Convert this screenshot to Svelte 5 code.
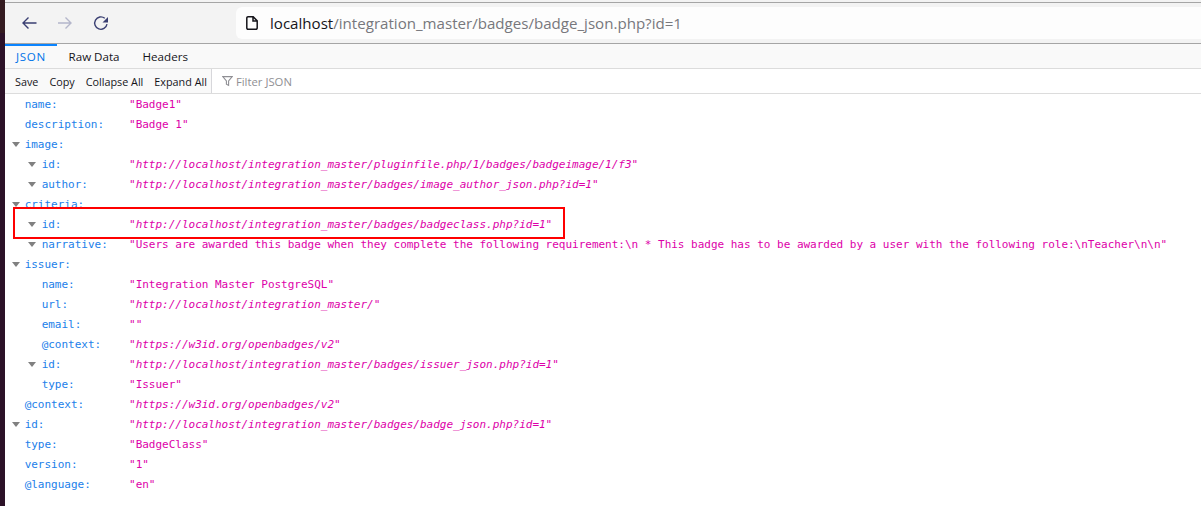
<script lang="ts">
  type Row = { key: string; value?: string; depth: number; twisty?: boolean; link?: boolean };

  const base = 'http://localhost/integration_master';

  const rows: Row[] = [
    { key: 'name', value: 'Badge1', depth: 0 },
    { key: 'description', value: 'Badge 1', depth: 0 },
    { key: 'image', depth: 0, twisty: true },
    { key: 'id', value: `${base}/pluginfile.php/1/badges/badgeimage/1/f3`, depth: 1, twisty: true, link: true },
    { key: 'author', value: `${base}/badges/image_author_json.php?id=1`, depth: 1, twisty: true, link: true },
    { key: 'criteria', depth: 0, twisty: true },
    { key: 'id', value: `${base}/badges/badgeclass.php?id=1`, depth: 1, twisty: true, link: true },
    {
      key: 'narrative',
      value:
        'Users are awarded this badge when they complete the following requirement:\\n * This badge has to be awarded by a user with the following role:\\nTeacher\\n\\n',
      depth: 1,
      twisty: true
    },
    { key: 'issuer', depth: 0, twisty: true },
    { key: 'name', value: 'Integration Master PostgreSQL', depth: 1 },
    { key: 'url', value: `${base}/`, depth: 1, link: true },
    { key: 'email', value: '', depth: 1 },
    { key: '@context', value: 'https://w3id.org/openbadges/v2', depth: 1, link: true },
    { key: 'id', value: `${base}/badges/issuer_json.php?id=1`, depth: 1, twisty: true, link: true },
    { key: 'type', value: 'Issuer', depth: 1 },
    { key: '@context', value: 'https://w3id.org/openbadges/v2', depth: 0, link: true },
    { key: 'id', value: `${base}/badges/badge_json.php?id=1`, depth: 0, twisty: true, link: true },
    { key: 'type', value: 'BadgeClass', depth: 0 },
    { key: 'version', value: '1', depth: 0 },
    { key: '@language', value: 'en', depth: 0 }
  ];

  const tabs = ['JSON', 'Raw Data', 'Headers'];
  const actions = ['Save', 'Copy', 'Collapse All', 'Expand All'];
</script>

<div class="shot">
  <div class="edge"></div>
  <div class="browser">
    <header class="navbar">
      <button class="nav" aria-label="Back">
        <svg viewBox="0 0 16 16" width="16" height="16"><path d="M15.500 8H2M7.500 2.500 2 8l5.500 5.500" /></svg>
      </button>
      <button class="nav off" aria-label="Forward">
        <svg viewBox="0 0 16 16" width="16" height="16"><path d="M1 8h13M8.500 2.500 14 8l-5.500 5.500" /></svg>
      </button>
      <button class="nav" aria-label="Reload">
        <svg viewBox="0 0 16 16" width="16" height="16">
          <path d="M14 9.200A6.200 6.200 0 1 1 11.800 3.300" />
          <path class="solid" d="M15 2v5.500H9.500z" />
        </svg>
      </button>
      <div class="urlbar">
        <svg class="page" viewBox="0 0 12 14" width="12" height="14">
          <path d="M2 .8h5.200L11.200 4.800V12a1.200 1.200 0 0 1-1.200 1.200H2A1.200 1.200 0 0 1 .8 12V2A1.200 1.200 0 0 1 2 .8zM7 .8v4.200h4.200" />
        </svg>
        <span class="host">localhost</span><span class="path">/integration_master/badges/badge_json.php?id=1</span>
      </div>
    </header>

    <nav class="tabs">
      {#each tabs as tab, i}
        <span class="tab" class:active={i === 0}>{tab}</span>
      {/each}
    </nav>

    <div class="actions">
      {#each actions as action}
        <span class="action">{action}</span>
      {/each}
      <div class="filter">
        <svg viewBox="0 0 12 12" width="11" height="12">
          <path d="M.8 1.200h10.400L7.200 6v4.800L4.800 9.500V6z" />
        </svg>
        <span>Filter JSON</span>
      </div>
    </div>

    <main class="tree">
      {#each rows as row}
        <div class="row" class:nested={row.depth > 0}>
          <div class="label">
            {#if row.twisty}<i class="twisty"></i>{/if}
            <span>{row.key}:</span>
          </div>
          {#if row.value !== undefined}
            <div class="value" class:link={row.link}>
              "<span>{row.value}</span>"
            </div>
          {/if}
        </div>
      {/each}
      <div class="callout"></div>
    </main>
  </div>
</div>

<style>
  :global(body) {
    margin: 0;
    background: #fff;
  }
  .shot {
    display: flex;
    width: 1201px;
    height: 506px;
    overflow: hidden;
  }
  .edge {
    width: 5px;
    flex: none;
    background: linear-gradient(#341b20 0 33px, #2c1228 33px);
  }
  .browser {
    flex: 1;
    min-width: 0;
    display: flex;
    flex-direction: column;
    font-family: "Open Sans", "Noto Sans", sans-serif;
    color: #15141a;
    background: #f3f3f3;
  }
  .navbar {
    height: 42px;
    margin-top: 2px;
    box-sizing: border-box;
    flex: none;
    display: flex;
    align-items: center;
    background: #f3f3f3;
    border-top: 1px solid #a5a5a5;
    border-bottom: 1px solid #a5a5a5;
    padding-left: 16px;
  }
  .nav {
    width: 16px;
    height: 16px;
    padding: 0;
    border: 0;
    background: none;
    margin-right: 20px;
    color: #3a3f72;
  }
  .nav.off {
    color: #b4b6cb;
  }
  .nav svg {
    display: block;
    fill: none;
    stroke: currentColor;
    stroke-width: 1.4;
  }
  .nav .solid {
    fill: currentColor;
    stroke: none;
  }
  .urlbar {
    margin-left: 107px;
    flex: 1;
    height: 32px;
    display: flex;
    align-items: center;
    background: #fdfdfd;
    border-radius: 6px 0 0 6px;
    padding-left: 10px;
    font-size: 15.100px;
    white-space: pre;
  }
  .page {
    margin-right: 12px;
    fill: none;
    stroke: #15141a;
    stroke-width: 1.5;
  }
  .host {
    color: #15141a;
  }
  .path {
    color: #77777c;
  }
  .tabs {
    height: 25px;
    flex: none;
    display: flex;
    background: #f9f9f9;
    border-bottom: 1px solid #dcdcdc;
    box-sizing: border-box;
    font-size: 11.600px;
  }
  .tab {
    padding: 0 11.500px;
    border-top: 2px solid transparent;
    line-height: 22px;
  }
  .tab.active {
    color: #0074e8;
    border-top-color: #0a84ff;
    letter-spacing: 0.7px;
    padding: 0 11px;
  }
  .actions {
    height: 25px;
    flex: none;
    box-sizing: border-box;
    display: flex;
    align-items: center;
    background: #f9f9f9;
    border-bottom: 1px solid #dcdcdc;
    padding-left: 10px;
    font-size: 10.800px;
    gap: 11px;
  }
  .filter {
    flex: 1;
    align-self: stretch;
    display: flex;
    align-items: center;
    gap: 3px;
    background: #fff;
    border-left: 1px solid #d7d7db;
    margin-left: -7px;
    padding-left: 10px;
    font-size: 11.300px;
    color: #8f8f94;
  }
  .filter svg {
    fill: none;
    stroke: #8f8f94;
    stroke-width: 1.2;
  }
  .tree {
    position: relative;
    flex: 1;
    background: #fff;
    font-family: "DejaVu Sans Mono", monospace;
    font-size: 11px;
  }
  .row {
    display: flex;
    align-items: center;
    height: 20px;
    white-space: pre;
  }
  .label {
    position: relative;
    flex: none;
    width: 124px;
    box-sizing: border-box;
    padding-left: 20px;
    padding-left: 13px;
    color: #1a80ea;
  }
  .nested .label {
    padding-left: 30px;
  }
  .twisty {
    position: absolute;
    top: 4px;
    left: 7px;
    width: 0;
    height: 0;
    border-left: 4px solid transparent;
    border-right: 4px solid transparent;
    border-top: 5px solid #808080;
  }
  .nested .twisty {
    left: 23px;
  }
  .value {
    color: #dd00a9;
    letter-spacing: -0.01px;
  }
  .value.link span {
    font-style: italic;
  }
  .callout {
    position: absolute;
    left: 8px;
    top: 113px;
    width: 552px;
    height: 32px;
    box-sizing: border-box;
    border: 2px solid #f00;
  }
</style>
